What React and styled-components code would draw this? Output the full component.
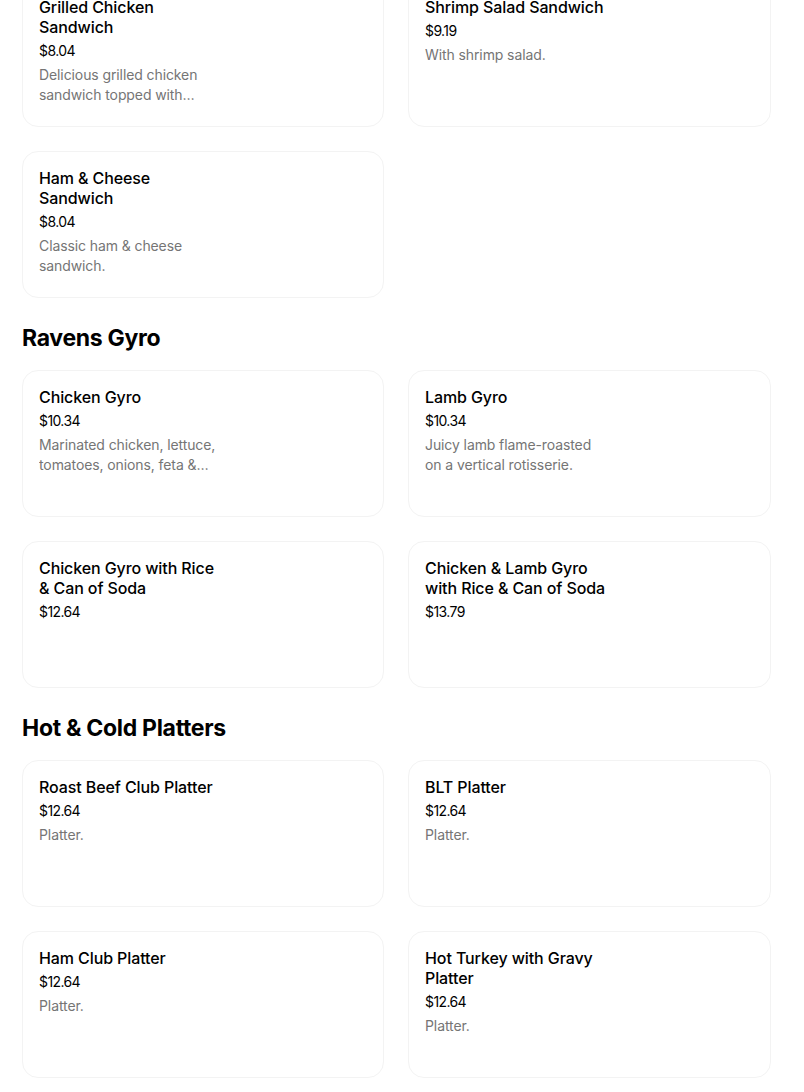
import React from "react";
import styled, { createGlobalStyle } from "styled-components";

const GlobalStyle = createGlobalStyle`
  html, body {
    margin: 0;
    padding: 0;
    background: #ffffff;
  }
  body {
    font-family: "Inter", "Liberation Sans", sans-serif;
    color: #000000;
    -webkit-font-smoothing: antialiased;
  }
`;

const Page = styled.div`
  width: 749px;
  padding-left: 22px;
  margin-top: -20px;
  overflow: hidden;
`;

const Section = styled.section`
  display: flex;
  flex-direction: column;
`;

const SectionTitle = styled.h2`
  margin: 24px 0 16px;
  font-size: 23px;
  line-height: 32px;
  font-weight: 700;
  letter-spacing: -0.3px;
`;

const Grid = styled.div`
  display: grid;
  grid-template-columns: 362px 363px;
  column-gap: 24px;
  row-gap: 24px;
`;

const Card = styled.div`
  box-sizing: border-box;
  height: 147px;
  border: 1px solid #f3f3f3;
  border-radius: 16px;
  padding: 16px;
  background: #ffffff;
  display: flex;
`;

const Info = styled.div`
  width: ${(p) => p.$width || 184}px;
  display: flex;
  flex-direction: column;
  gap: 4px;
`;

const ItemName = styled.div`
  font-size: 16px;
  line-height: 20px;
  font-weight: 500;
  letter-spacing: -0.1px;
`;

const Price = styled.div`
  font-size: 14px;
  line-height: 20px;
  font-weight: 400;
  letter-spacing: -0.6px;
`;

const Description = styled.div`
  font-size: 14px;
  line-height: 20px;
  color: #757575;
  letter-spacing: -0.1px;
  display: -webkit-box;
  -webkit-line-clamp: 2;
  -webkit-box-orient: vertical;
  overflow: hidden;
`;

const sections = [
  {
    title: null,
    items: [
      {
        name: "Grilled Chicken Sandwich",
        price: "$8.04",
        desc: "Delicious grilled chicken sandwich topped with lettuce, tomatoes and mayo.",
      },
      { name: "Shrimp Salad Sandwich", price: "$9.19", desc: "With shrimp salad." },
      { name: "Ham & Cheese Sandwich", price: "$8.04", desc: "Classic ham & cheese sandwich." },
    ],
  },
  {
    title: "Ravens Gyro",
    items: [
      {
        name: "Chicken Gyro",
        price: "$10.34",
        desc: "Marinated chicken, lettuce, tomatoes, onions, feta & tzatziki sauce.",
      },
      {
        name: "Lamb Gyro",
        price: "$10.34",
        desc: "Juicy lamb flame-roasted on a vertical rotisserie.",
      },
      { name: "Chicken Gyro with Rice & Can of Soda", price: "$12.64" },
      { name: "Chicken & Lamb Gyro with Rice & Can of Soda", price: "$13.79" },
    ],
  },
  {
    title: "Hot & Cold Platters",
    items: [
      { name: "Roast Beef Club Platter", price: "$12.64", desc: "Platter." },
      { name: "BLT Platter", price: "$12.64", desc: "Platter." },
      { name: "Ham Club Platter", price: "$12.64", desc: "Platter." },
      { name: "Hot Turkey with Gravy Platter", price: "$12.64", desc: "Platter." },
    ],
  },
];

const MenuItem = ({ item }) => (
  <Card>
    <Info>
      <ItemName>{item.name}</ItemName>
      <Price>{item.price}</Price>
      {item.desc && <Description>{item.desc}</Description>}
    </Info>
  </Card>
);

export default function App() {
  return (
    <>
      <GlobalStyle />
      <Page>
        {sections.map((s, i) => (
          <Section key={i}>
            {s.title && <SectionTitle>{s.title}</SectionTitle>}
            <Grid>
              {s.items.map((item) => (
                <MenuItem key={item.name} item={item} />
              ))}
            </Grid>
          </Section>
        ))}
      </Page>
    </>
  );
}
